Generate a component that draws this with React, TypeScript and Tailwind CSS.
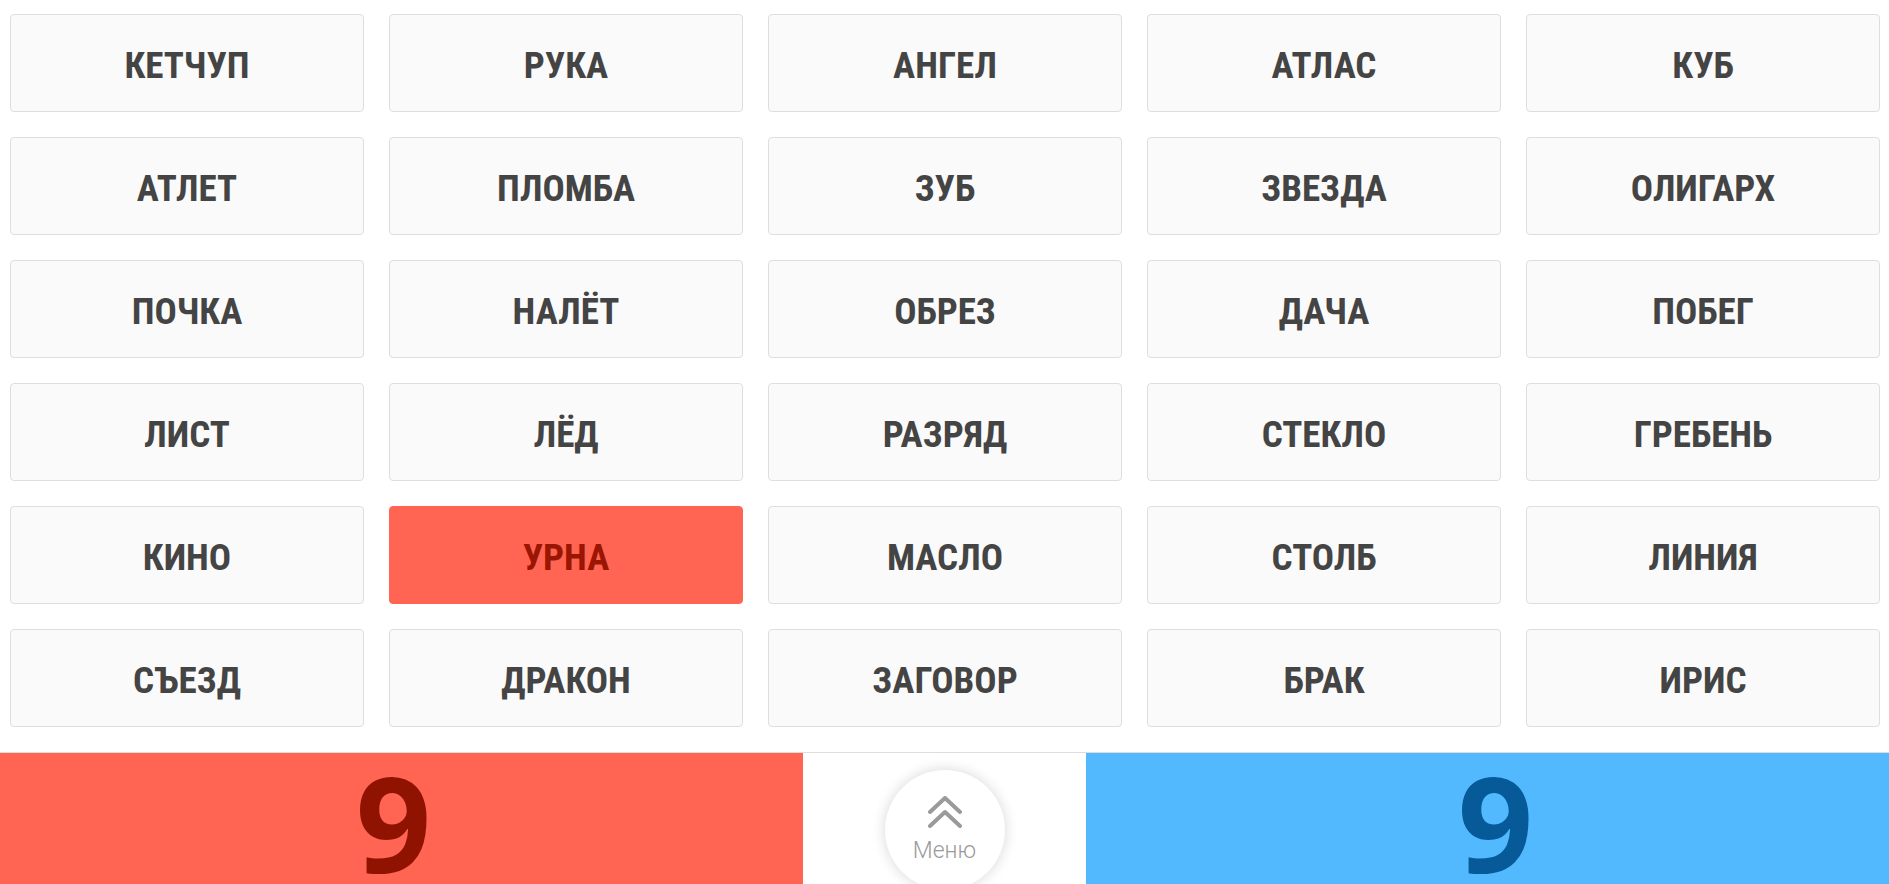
import React from "react";

const rows: string[][] = [
  ["КЕТЧУП", "РУКА", "АНГЕЛ", "АТЛАС", "КУБ"],
  ["АТЛЕТ", "ПЛОМБА", "ЗУБ", "ЗВЕЗДА", "ОЛИГАРХ"],
  ["ПОЧКА", "НАЛЁТ", "ОБРЕЗ", "ДАЧА", "ПОБЕГ"],
  ["ЛИСТ", "ЛЁД", "РАЗРЯД", "СТЕКЛО", "ГРЕБЕНЬ"],
  ["КИНО", "УРНА", "МАСЛО", "СТОЛБ", "ЛИНИЯ"],
  ["СЪЕЗД", "ДРАКОН", "ЗАГОВОР", "БРАК", "ИРИС"],
];

const revealed: Record<string, "red" | "blue"> = { "УРНА": "red" };

function Card({ word }: { word: string }) {
  const state = revealed[word];
  const base =
    "h-[98px] rounded-[4px] border flex items-center justify-center pt-[4px] select-none";
  const cls =
    state === "red"
      ? `${base} bg-[#ff6552] border-[#ff6552] text-[#9a1502]`
      : `${base} bg-[#fafafa] border-[#dedede] text-[#444444]`;
  return (
    <div className={cls}>
      <span className="text-[37px] font-bold leading-none font-stretch-condensed [font-family:'Roboto_Condensed',Roboto,'Liberation_Sans',sans-serif]">
        {word}
      </span>
    </div>
  );
}

function DoubleChevron() {
  return (
    <svg width="34" height="32" viewBox="0 0 34 32" fill="none">
      <polyline
        points="2,16 17,2 32,16"
        stroke="#9a9a9a"
        strokeWidth="4"
        strokeLinecap="round"
        strokeLinejoin="round"
      />
      <polyline
        points="2,30 17,16 32,30"
        stroke="#9a9a9a"
        strokeWidth="4"
        strokeLinecap="round"
        strokeLinejoin="round"
      />
    </svg>
  );
}

export default function App() {
  return (
    <div className="h-[884px] w-full overflow-hidden bg-white flex flex-col">
      <div className="pt-[14px] pb-[25px] pl-[10px] pr-[9px]">
        <div className="grid grid-cols-5 gap-[25px]">
          {rows.flat().map((w) => (
            <Card key={w} word={w} />
          ))}
        </div>
      </div>
      <div className="flex-1 flex border-t border-[#dddddd] overflow-hidden">
        <div className="w-[42.5%] bg-[#ff6552] flex justify-center pr-[16px]">
          <span className="text-[132px] font-bold leading-none text-[#8f1300] [font-family:'Open_Sans','Noto_Sans',sans-serif] mt-[3px]">
            9
          </span>
        </div>
        <div className="flex-1 bg-white flex justify-center">
          <div className="mt-[17px] w-[120px] h-[120px] shrink-0 rounded-full bg-white shadow-[0_0_14px_rgba(0,0,0,0.16)] flex flex-col items-center pt-[26px]">
            <DoubleChevron />
            <span className="mt-[11px] text-[23px] font-light leading-none text-[#9a9a9a] [font-family:Roboto,'Liberation_Sans',sans-serif]">
              Меню
            </span>
          </div>
        </div>
        <div className="w-[42.5%] bg-[#52b9ff] flex justify-center pl-[16px]">
          <span className="text-[132px] font-bold leading-none text-[#065a98] [font-family:'Open_Sans','Noto_Sans',sans-serif] mt-[3px]">
            9
          </span>
        </div>
      </div>
    </div>
  );
}
